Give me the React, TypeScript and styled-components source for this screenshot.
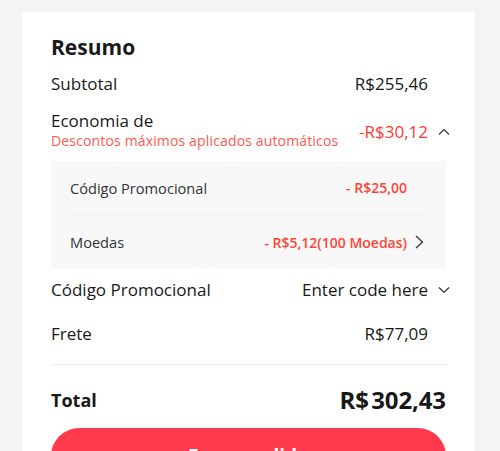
import React from "react";
import styled, { createGlobalStyle } from "styled-components";

const GlobalStyle = createGlobalStyle`
  html, body {
    margin: 0;
    padding: 0;
    background: #f4f4f4;
    font-family: "Open Sans", "Liberation Sans", sans-serif;
    color: #191919;
  }
`;

const Page = styled.div`
  padding: 12px 25px 0 22px;
  height: 439px;
  overflow: hidden;
`;

const Card = styled.section`
  background: #fff;
  width: 453px;
  box-sizing: border-box;
  padding: 23px 29px 0;
  display: flex;
  flex-direction: column;
  min-height: 500px;
`;

const Title = styled.h2`
  margin: 0;
  font-size: 21px;
  line-height: 24px;
  font-weight: 700;
`;

const Row = styled.div<{ $gap?: number; $height?: number }>`
  display: flex;
  align-items: center;
  justify-content: space-between;
  margin-top: ${(p) => p.$gap ?? 0}px;
  min-height: ${(p) => p.$height ?? 24}px;
  font-size: 17px;
  line-height: 24px;
`;

const Label = styled.div<{ $bold?: boolean }>`
  font-weight: ${(p) => (p.$bold ? 700 : 400)};
  font-size: ${(p) => (p.$bold ? 18 : 17)}px;
`;

const LabelStack = styled.div`
  display: flex;
  flex-direction: column;
`;

const LabelMain = styled.span`
  font-size: 17px;
  line-height: 22px;
`;

const LabelHint = styled.span`
  font-size: 14px;
  line-height: 18px;
  letter-spacing: 0.15px;
  color: #fb5a50;
`;

const Right = styled.div<{ $shift?: number }>`
  display: flex;
  align-items: center;
  gap: 10px;
  margin-right: -4px;
  margin-top: ${(p) => p.$shift ?? 0}px;
`;

const Value = styled.span<{ $red?: boolean }>`
  color: ${(p) => (p.$red ? "#ff3b30" : "#191919")};
  white-space: nowrap;
`;

const Slot = styled.span<{ $w: number }>`
  width: ${(p) => p.$w}px;
  display: flex;
  align-items: center;
  color: #333;
`;

const Panel = styled.div`
  margin-top: 11px;
  background: #f8f8f8;
  padding: 0 19px;
`;

const SubRow = styled.div<{ $divider?: boolean }>`
  display: flex;
  align-items: center;
  justify-content: space-between;
  height: 54px;
  font-size: 14.6px;
  color: #333;
  border-bottom: ${(p) => (p.$divider ? "1px solid #efefef" : "none")};
  box-sizing: border-box;
`;

const SubRight = styled.div`
  display: flex;
  align-items: center;
  gap: 8px;
`;

const SubValue = styled.span`
  color: #ff4438;
  font-size: 14px;
  font-weight: 600;
`;

const Divider = styled.hr`
  margin: 18px 0 0;
  border: 0;
  border-top: 1px solid #eeeeee;
`;

const TotalValue = styled.span`
  font-size: 24px;
  line-height: 32px;
  font-weight: 700;
  letter-spacing: -0.1px;
`;

const OrderButton = styled.button`
  margin-top: 12px;
  height: 56px;
  border: 0;
  border-radius: 28px;
  background: #ff3a4f;
  color: #fff;
  font-family: inherit;
  font-size: 19px;
  font-weight: 700;
`;

type Dir = "up" | "down" | "right";

const Chevron: React.FC<{ dir: Dir }> = ({ dir }) => {
  if (dir === "right") {
    return (
      <svg width="9" height="14" viewBox="0 0 9 14" fill="none">
        <polyline points="1,1 7.5,7 1,13" stroke="currentColor" strokeWidth="1.3" />
      </svg>
    );
  }
  const pts = dir === "up" ? "1,6.5 6,1.5 11,6.5" : "1,1.5 6,6.5 11,1.5";
  return (
    <svg width="12" height="8" viewBox="0 0 12 8" fill="none">
      <polyline points={pts} stroke="currentColor" strokeWidth="1.2" />
    </svg>
  );
};

const App: React.FC = () => {
  return (
    <Page>
      <GlobalStyle />
      <Card>
        <Title>Resumo</Title>

        <Row $gap={13}>
          <Label>Subtotal</Label>
          <Right>
            <Value>R$255,46</Value>
            <Slot $w={12} />
          </Right>
        </Row>

        <Row $gap={14}>
          <LabelStack>
            <LabelMain>Economia de</LabelMain>
            <LabelHint>Descontos máximos aplicados automáticos</LabelHint>
          </LabelStack>
          <Right $shift={4}>
            <Value $red>-R$30,12</Value>
            <Slot $w={12}>
              <Chevron dir="up" />
            </Slot>
          </Right>
        </Row>

        <Panel>
          <SubRow $divider>
            <span>Código Promocional</span>
            <SubRight>
              <SubValue>- R$25,00</SubValue>
              <Slot $w={12} />
            </SubRight>
          </SubRow>
          <SubRow>
            <span>Moedas</span>
            <SubRight>
              <SubValue>- R$5,12(100 Moedas)</SubValue>
              <Slot $w={12}>
                <Chevron dir="right" />
              </Slot>
            </SubRight>
          </SubRow>
        </Panel>

        <Row $gap={9}>
          <Label>Código Promocional</Label>
          <Right>
            <Value>Enter code here</Value>
            <Slot $w={12}>
              <Chevron dir="down" />
            </Slot>
          </Right>
        </Row>

        <Row $gap={20}>
          <Label>Frete</Label>
          <Right>
            <Value>R$77,09</Value>
            <Slot $w={12} />
          </Right>
        </Row>

        <Divider />

        <Row $gap={19} $height={32}>
          <Label $bold>Total</Label>
          <TotalValue>R$&#8202;302,43</TotalValue>
        </Row>

        <OrderButton>Fazer pedido</OrderButton>
      </Card>
    </Page>
  );
};

export default App;
